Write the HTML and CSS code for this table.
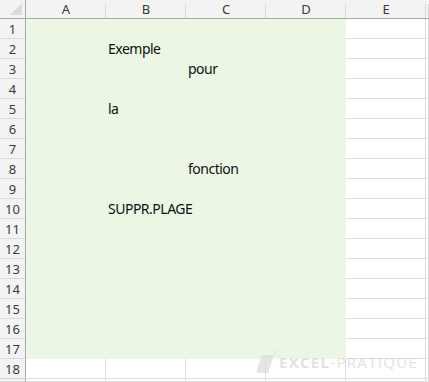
FILE: index.html
```html
<!DOCTYPE html>
<html lang="fr">
<head>
<meta charset="utf-8">
<title>SUPPR.PLAGE</title>
<link rel="stylesheet" href="styles.css">
</head>
<body>
<div class="sheet">
  <div class="corner"><span class="tri"></span></div>
  <div class="colhead">A</div>
  <div class="colhead">B</div>
  <div class="colhead">C</div>
  <div class="colhead">D</div>
  <div class="colhead">E</div>
  <div class="colhead"></div>

  <div class="rowhead">1</div><div class="c g"></div><div class="c g"></div><div class="c g"></div><div class="c g"></div><div class="c"></div><div class="c"></div>
  <div class="rowhead">2</div><div class="c g"></div><div class="c g t">Exemple</div><div class="c g"></div><div class="c g"></div><div class="c"></div><div class="c"></div>
  <div class="rowhead">3</div><div class="c g"></div><div class="c g"></div><div class="c g t">pour</div><div class="c g"></div><div class="c"></div><div class="c"></div>
  <div class="rowhead">4</div><div class="c g"></div><div class="c g"></div><div class="c g"></div><div class="c g"></div><div class="c"></div><div class="c"></div>
  <div class="rowhead">5</div><div class="c g"></div><div class="c g t">la</div><div class="c g"></div><div class="c g"></div><div class="c"></div><div class="c"></div>
  <div class="rowhead">6</div><div class="c g"></div><div class="c g"></div><div class="c g"></div><div class="c g"></div><div class="c"></div><div class="c"></div>
  <div class="rowhead">7</div><div class="c g"></div><div class="c g"></div><div class="c g"></div><div class="c g"></div><div class="c"></div><div class="c"></div>
  <div class="rowhead">8</div><div class="c g"></div><div class="c g"></div><div class="c g t">fonction</div><div class="c g"></div><div class="c"></div><div class="c"></div>
  <div class="rowhead">9</div><div class="c g"></div><div class="c g"></div><div class="c g"></div><div class="c g"></div><div class="c"></div><div class="c"></div>
  <div class="rowhead">10</div><div class="c g"></div><div class="c g t">SUPPR.PLAGE</div><div class="c g"></div><div class="c g"></div><div class="c"></div><div class="c"></div>
  <div class="rowhead">11</div><div class="c g"></div><div class="c g"></div><div class="c g"></div><div class="c g"></div><div class="c"></div><div class="c"></div>
  <div class="rowhead">12</div><div class="c g"></div><div class="c g"></div><div class="c g"></div><div class="c g"></div><div class="c"></div><div class="c"></div>
  <div class="rowhead">13</div><div class="c g"></div><div class="c g"></div><div class="c g"></div><div class="c g"></div><div class="c"></div><div class="c"></div>
  <div class="rowhead">14</div><div class="c g"></div><div class="c g"></div><div class="c g"></div><div class="c g"></div><div class="c"></div><div class="c"></div>
  <div class="rowhead">15</div><div class="c g"></div><div class="c g"></div><div class="c g"></div><div class="c g"></div><div class="c"></div><div class="c"></div>
  <div class="rowhead">16</div><div class="c g"></div><div class="c g"></div><div class="c g"></div><div class="c g"></div><div class="c"></div><div class="c"></div>
  <div class="rowhead">17</div><div class="c g"></div><div class="c g"></div><div class="c g"></div><div class="c g"></div><div class="c"></div><div class="c"></div>
  <div class="rowhead">18</div><div class="c"></div><div class="c"></div><div class="c"></div><div class="c"></div><div class="c"></div><div class="c"></div>
  <div class="rowhead"></div><div class="c"></div><div class="c"></div><div class="c"></div><div class="c"></div><div class="c"></div><div class="c"></div>

  <div class="watermark">
    <svg class="wm-logo" width="26" height="26" viewBox="0 0 26 26">
      <polygon points="8,8 20,8 14,26 2,26" fill="#dcdcdc"/>
      <circle cx="21" cy="6" r="1.3" fill="#e0e0e0"/>
      <circle cx="24" cy="9" r="1" fill="#e2e2e2"/>
      <circle cx="18" cy="4" r="1" fill="#e4e4e4"/>
      <circle cx="24" cy="4" r="0.9" fill="#e4e4e4"/>
      <circle cx="21" cy="1.5" r="0.8" fill="#e6e6e6"/>
    </svg>
    <span class="wm-text"><b class="wm-bold">EXCEL</b>-PRATIQUE</span>
  </div>
</div>
</body>
</html>
```

FILE: styles.css
```css
html, body {
  margin: 0;
  padding: 0;
  background: #ffffff;
  overflow: hidden;
}

.sheet {
  position: relative;
  display: grid;
  grid-template-columns: 26px repeat(5, 80px) 3px;
  grid-template-rows: 19px repeat(18, 20px) 3px;
  width: 429px;
  height: 382px;
  overflow: hidden;
  font-family: "Noto Sans", "Open Sans", sans-serif;
}

.corner {
  position: relative;
  background: #f3f3f3;
  border-right: 1px solid #a9a9a9;
  border-bottom: 1px solid #a9a9a9;
  box-sizing: border-box;
}

.tri {
  position: absolute;
  right: 3px;
  bottom: 3px;
  width: 0;
  height: 0;
  border-left: 12px solid transparent;
  border-bottom: 12px solid #dcdcdc;
}

.colhead {
  background: #f3f3f3;
  border-bottom: 1px solid #a9a9a9;
  box-sizing: border-box;
  position: relative;
  font-size: 13px;
  line-height: 18px;
  color: #3a3a3a;
  text-align: center;
}

.colhead::after {
  content: "";
  position: absolute;
  right: 0;
  top: 4px;
  bottom: 0;
  width: 1px;
  background: #d9d9d9;
}

.rowhead {
  background: #f3f3f3;
  border-right: 1px solid #a9a9a9;
  border-bottom: 1px solid #dadada;
  box-sizing: border-box;
  font-size: 13px;
  line-height: 20px;
  color: #3a3a3a;
  text-align: center;
}

.c {
  border-right: 1px solid #dcdcdc;
  border-bottom: 1px solid #dcdcdc;
  box-sizing: border-box;
  font-size: 14px;
  line-height: 19px;
  padding-left: 2px;
  color: #111;
  white-space: nowrap;
  letter-spacing: -0.5px;
}

.c.g {
  background: #ebf6e5;
  border-color: #ebf6e5;
}

.c.t {
  position: relative;
  z-index: 1;
  overflow: visible;
}

.watermark {
  position: absolute;
  left: 254px;
  top: 347px;
  z-index: 2;
  display: flex;
  align-items: flex-end;
  opacity: 0.7;
}

.wm-text {
  font-family: "Open Sans", sans-serif;
  font-size: 15px;
  line-height: 22px;
  color: #d6d6d6;
  letter-spacing: 1.3px;
  margin-left: -1px;
}

.wm-bold {
  font-weight: 700;
}
```
